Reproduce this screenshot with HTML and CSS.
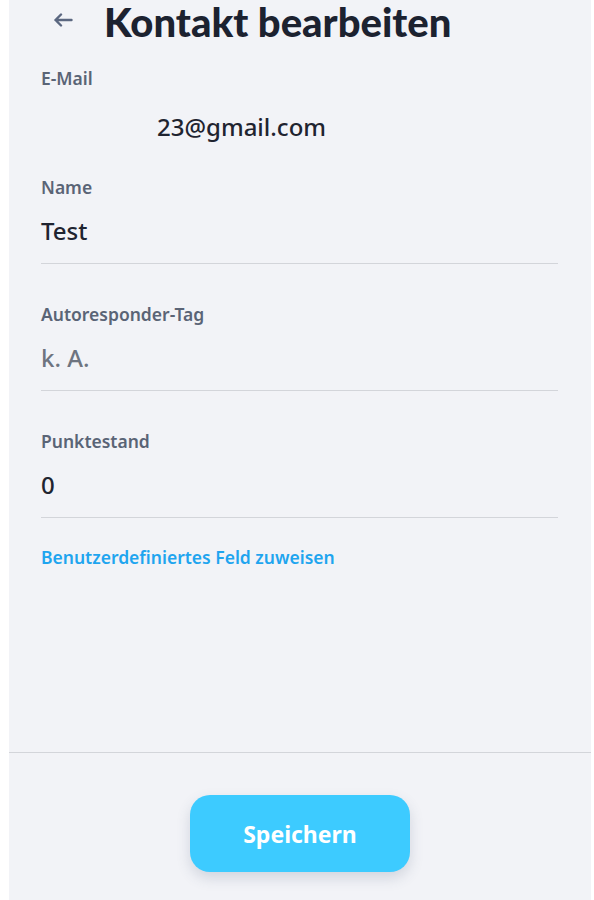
FILE: index.html
```html
<!DOCTYPE html>
<html lang="de">
<head>
<meta charset="utf-8">
<title>Kontakt bearbeiten</title>
<link rel="stylesheet" href="styles.css">
</head>
<body>
<div class="panel">
  <header class="header">
    <button class="back" aria-label="Zurück">
      <svg width="20" height="14" viewBox="0 0 20 14" fill="none" stroke="#5b6780" stroke-width="2.4" stroke-linecap="round" stroke-linejoin="round"><path d="M18.5 7H2.5M8 1.5L2.5 7L8 12.5"/></svg>
    </button>
    <h1 class="title">Kontakt bearbeiten</h1>
  </header>
  <main class="form">
    <div class="field field-email">
      <div class="label">E-Mail</div>
      <div class="value email">23@gmail.com</div>
    </div>
    <div class="field lined">
      <div class="label">Name</div>
      <div class="value">Test</div>
    </div>
    <div class="field lined">
      <div class="label">Autoresponder-Tag</div>
      <div class="value muted">k. A.</div>
    </div>
    <div class="field lined">
      <div class="label">Punktestand</div>
      <div class="value">0</div>
    </div>
    <a class="link" href="#">Benutzerdefiniertes Feld zuweisen</a>
  </main>
  <footer class="footer">
    <button class="save">Speichern</button>
  </footer>
</div>
</body>
</html>
```
FILE: styles.css
```css
* { box-sizing: border-box; }
html, body { margin: 0; padding: 0; }
body {
  background: #ffffff;
  font-family: "Noto Sans", Lato, sans-serif;
  width: 594px;
  height: 900px;
  overflow: hidden;
}
.panel {
  margin: 0 3px 0 9px;
  height: 900px;
  background: #f2f3f7;
  display: flex;
  flex-direction: column;
}
.header {
  display: flex;
  align-items: center;
  height: 44px;
  padding-left: 44px;
}
.back {
  border: 0;
  background: none;
  padding: 0;
  width: 20px;
  height: 14px;
  display: flex;
  margin-top: -4px;
}
.title {
  margin: 0 0 0 31px;
  font-family: Lato, "Noto Sans", sans-serif;
  font-size: 40px;
  font-weight: 900;
  line-height: 50px;
  height: 44px;
  display: flex;
  align-items: center;
  color: #1c2230;
}
.form {
  padding: 22px 33px 0 32px;
  display: flex;
  flex-direction: column;
}
.label {
  font-size: 17.5px;
  line-height: 24px;
  font-weight: 600;
  color: #5a6476;
}
.value {
  font-size: 24px;
  line-height: 30px;
  font-weight: 500;
  color: #1f2430;
  margin-top: 17px;
}
.field-email .value { margin-top: 22px; }
.email { padding-left: 116px; }
.muted { color: #6e7480; }
.field-email { margin-bottom: 33px; }
.lined {
  border-bottom: 1px solid #d3d5da;
  padding-bottom: 17px;
  margin-bottom: 38px;
}
.lined:last-of-type { margin-bottom: 27px; }
.link {
  font-size: 17.5px;
  line-height: 24px;
  font-weight: 600;
  color: #1fa5ef;
  text-decoration: none;
  align-self: flex-start;
}
.footer {
  margin-top: auto;
  border-top: 1px solid #d3d5da;
  height: 148px;
  display: flex;
  justify-content: center;
  padding-top: 42px;
}
.save {
  width: 220px;
  height: 77px;
  border: 0;
  border-radius: 20px;
  background: #3dcbff;
  color: #ffffff;
  font-family: "Noto Sans", Lato, sans-serif;
  font-size: 23px;
  font-weight: 700;
  box-shadow: 0 6px 14px rgba(60, 80, 110, 0.18);
}
```
